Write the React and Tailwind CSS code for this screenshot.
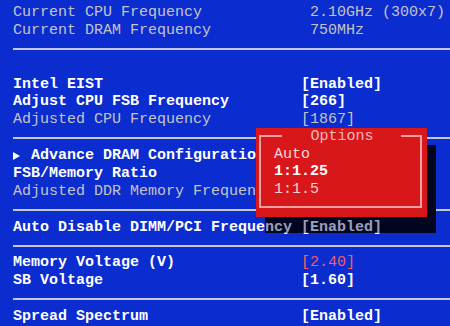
import React from 'react';

const rows = [
  { label: 'Current CPU Frequency', value: ' 2.10GHz (300x7)', tone: 'gray' },
  { label: 'Current DRAM Frequency', value: ' 750MHz', tone: 'gray' },
  'sep',
  'blank',
  { label: 'Intel EIST', value: '[Enabled]', tone: 'white' },
  { label: 'Adjust CPU FSB Frequency', value: '[266]', tone: 'white' },
  { label: 'Adjusted CPU Frequency', value: '[1867]', tone: 'gray' },
  'sep',
  { label: 'Advance DRAM Configuration', arrow: true, tone: 'white' },
  { label: 'FSB/Memory Ratio', tone: 'white' },
  { label: 'Adjusted DDR Memory Frequency', tone: 'gray' },
  'sep',
  { label: 'Auto Disable DIMM/PCI Frequency', value: '[Enabled]', tone: 'white' },
  'sep',
  { label: 'Memory Voltage (V)', value: '[2.40]', tone: 'white', valueTone: 'red' },
  { label: 'SB Voltage', value: '[1.60]', tone: 'white' },
  'sep',
  { label: 'Spread Spectrum', value: '[Enabled]', tone: 'white' },
];

const toneClass = {
  gray: 'text-[#c4c4c8] font-normal',
  white: 'text-white font-bold',
  red: 'text-[#f0606a] font-normal',
};

const Row = ({ row }) => {
  if (row === 'sep') {
    return (
      <div className="h-[17.9px] flex items-center">
        <div className="h-[2px] w-full bg-[#c8c8d4]" />
      </div>
    );
  }
  if (row === 'blank') return <div className="h-[17.9px]" />;

  return (
    <div className="h-[17.9px] leading-[17.9px] flex whitespace-pre relative z-10">
      <div className={`w-[288px] shrink-0 flex items-center ${toneClass[row.tone]}`}>
        {row.arrow && (
          <span className="w-[18px] shrink-0 flex items-center">
            <svg width="7" height="8" viewBox="0 0 7 8">
              <path d="M0 0 L7 4 L0 8 Z" fill="#ffffff" />
            </svg>
          </span>
        )}
        <span>{row.label}</span>
      </div>
      {row.value && (
        <div className={toneClass[row.valueTone || row.tone]}>{row.value}</div>
      )}
    </div>
  );
};

export default function App() {
  return (
    <div
      className="relative w-[450px] h-[326px] overflow-hidden bg-[#0b2ccf] text-[15px] pt-[4px] pl-[13px]"
      style={{ fontFamily: '"Liberation Mono", "DejaVu Sans Mono", monospace' }}
    >
      {rows.map((row, i) => (
        <Row key={i} row={row} />
      ))}

      {/* sombra del cuadro de opciones */}
      <div className="absolute left-[265px] top-[145px] w-[171px] h-[88px] bg-black z-0" />
      <div className="absolute left-[265px] top-[145px] w-[171px] h-[88px] bg-[#000c50]/40 z-20" />

      {/* cuadro de opciones */}
      <div className="absolute left-[256px] top-[128px] w-[171px] h-[89px] bg-[#d8171b] z-30">
        <div className="absolute left-[3px] top-[7px] right-[5px] bottom-[9px] border-2 border-[#eea0a4]" />
        <div className="relative flex justify-center h-[17.9px] leading-[17.9px]">
          <span className="bg-[#d8171b] pr-[27px] pl-[28px] text-[#f4b8b8]">Options</span>
        </div>
        <div className="relative flex flex-col pl-[18px] leading-[17.5px]">
          <div className="h-[17.5px] text-[#f8d8d8]">Auto</div>
          <div className="h-[17.5px] text-white font-bold">1:1.25</div>
          <div className="h-[17.5px] text-[#f8d0d0]">1:1.5</div>
        </div>
      </div>
    </div>
  );
}
